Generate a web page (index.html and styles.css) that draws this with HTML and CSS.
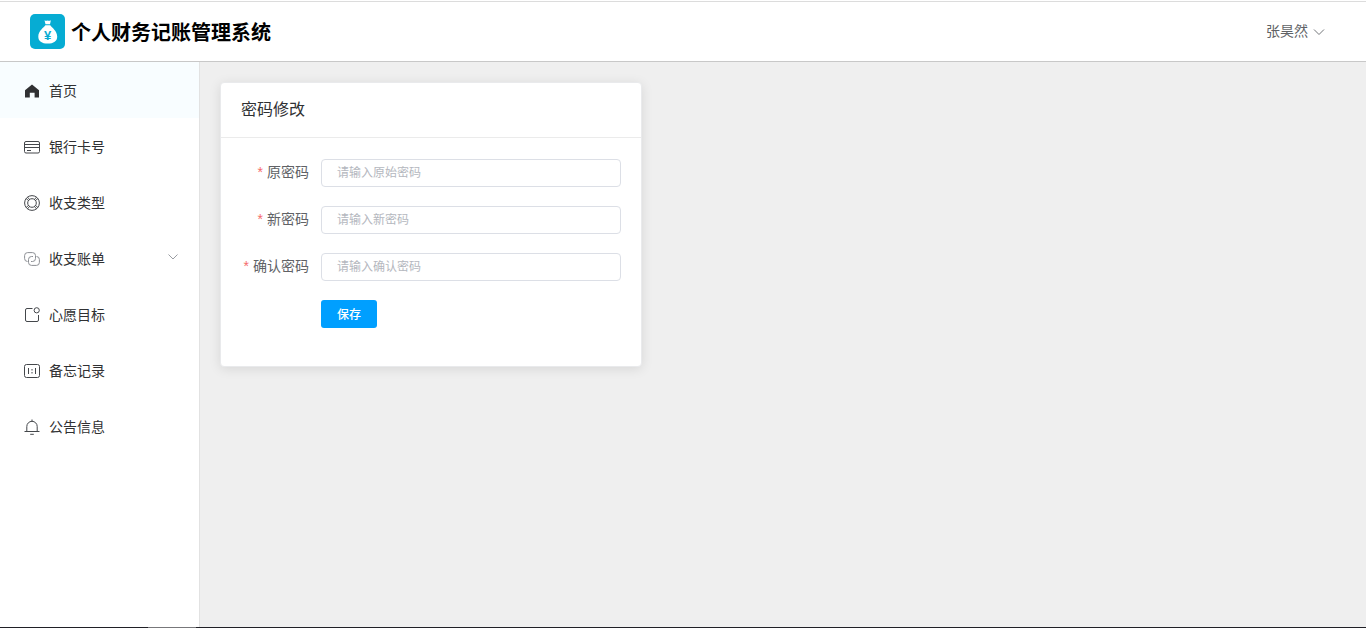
FILE: index.html
```html
<!DOCTYPE html>
<html lang="zh-CN">
<head>
<meta charset="utf-8">
<title>个人财务记账管理系统</title>
<link rel="stylesheet" href="styles.css">
</head>
<body>
<div class="app">
  <header class="header">
    <div class="brand">
      <svg class="logo" viewBox="0 0 35 35" aria-hidden="true">
        <rect width="35" height="35" rx="5" fill="#06acd3"/>
        <path d="M14.500 6.200q1.600.9 3 .2 1.500.7 3.400-.2L20 10.300h-4.500z" fill="#fff"/>
        <path d="M15.300 11.300h5c1.500 2.300 6.900 5.700 6.900 11.200 0 4.800-3.600 7.100-9.500 7.100s-9.400-2.300-9.400-7.100c0-5.500 5.500-8.900 7-11.200z" fill="#fff"/>
        <text class="logo-sign" x="17.500" y="26" text-anchor="middle">¥</text>
      </svg>
      <h1 class="brand-name">个人财务记账管理系统</h1>
    </div>
    <button class="user" type="button"><span>张昊然</span>
      <svg class="chevron" viewBox="0 0 12 12"><path d="M1 3.500 6 8.500l5-5"/></svg>
    </button>
  </header>
  <div class="main">
    <nav class="sidebar">
      <a class="item active" href="#">
        <svg class="icon solid" viewBox="0 0 16 16"><path d="M8 1.600 15 7.200V14.500h-4.400V9.800H5.800v4.700H1V7.200z"/></svg>
        <span class="item-text">首页</span></a>
      <a class="item" href="#">
        <svg class="icon" viewBox="0 0 16 16"><rect x=".5" y="2.500" width="15" height="11.500" rx="1.500"/><path d="M.5 5.500h15M.5 8.500h15M3 11.500h4"/></svg>
        <span class="item-text">银行卡号</span></a>
      <a class="item" href="#">
        <svg class="icon" viewBox="0 0 16 16"><circle cx="8" cy="8" r="7.400"/><circle cx="8" cy="8" r="4.300"/><path d="M2.300 3.500 4.300 5.600M3.500 2.300 5.600 4.300M12.500 2.300 10.400 4.300M13.700 3.500 11.700 5.600M2.300 12.500 4.300 10.400M3.500 13.700 5.600 11.700M12.500 13.700 10.400 11.700M13.700 12.500 11.700 10.400"/></svg>
        <span class="item-text">收支类型</span></a>
      <a class="item" href="#">
        <svg class="icon muted" viewBox="0 0 16 16"><path d="M3.500 10.500A3 3 0 0 1 .6 7.500V4.600a3 3 0 0 1 3-3h4.900a3 3 0 0 1 3 3v2.900a3 3 0 0 1-3 3H7"/><path d="M12.500 5.500a3 3 0 0 1 2.900 3v2.900a3 3 0 0 1-3 3H7.500a3 3 0 0 1-3-3V8.500a3 3 0 0 1 3-3H9"/></svg>
        <span class="item-text">收支账单</span>
        <svg class="chevron arrow" viewBox="0 0 12 12"><path d="M1.500 3.500 6 8l4.500-4.500"/></svg></a>
      <a class="item" href="#">
        <svg class="icon" viewBox="0 0 16 16"><path d="M8.500 1.500H3q-1.500 0-1.500 1.500v10q0 1.500 1.500 1.500h10q1.500 0 1.500-1.500V8"/><circle cx="12.700" cy="3.300" r="2.600"/></svg>
        <span class="item-text">心愿目标</span></a>
      <a class="item" href="#">
        <svg class="icon" viewBox="0 0 16 16"><rect x=".5" y="1.500" width="15" height="13" rx="2"/><path d="M4.500 5v6M11.500 5v6M8 6v1.500M8 9v1.500"/></svg>
        <span class="item-text">备忘记录</span></a>
      <a class="item" href="#">
        <svg class="icon" viewBox="0 0 16 16"><path d="M2.800 12.500V7.500a5.200 5.200 0 0 1 10.400 0v5M.5 12.500h15M8 .5v2M6.200 15.300h3.600"/></svg>
        <span class="item-text">公告信息</span></a>
    </nav>
    <main class="content">
      <section class="card">
        <h2 class="card-title">密码修改</h2>
        <form class="form">
          <div class="row">
            <label class="label" for="old">原密码</label>
            <input class="input" id="old" type="password" placeholder="请输入原始密码">
          </div>
          <div class="row">
            <label class="label" for="new">新密码</label>
            <input class="input" id="new" type="password" placeholder="请输入新密码">
          </div>
          <div class="row">
            <label class="label" for="confirm">确认密码</label>
            <input class="input" id="confirm" type="password" placeholder="请输入确认密码">
          </div>
          <div class="row actions">
            <button class="save" type="button">保存</button>
          </div>
        </form>
      </section>
    </main>
  </div>
  <div class="edge"></div>
</div>
</body>
</html>
```

FILE: styles.css
```css
* {
  box-sizing: border-box;
}

body {
  margin: 0;
  font-family: "Liberation Sans", "Noto Sans CJK SC", sans-serif;
  font-size: 14px;
  color: #303133;
}

button,
input {
  font-family: inherit;
}

.app {
  display: flex;
  flex-direction: column;
  min-height: 100vh;
  padding-top: 1px;
}

.header {
  display: flex;
  align-items: center;
  justify-content: space-between;
  height: 61px;
  padding: 0 41px 0 30px;
  border-top: 1px solid #dcdcdc;
  border-bottom: 1px solid #c8c8c8;
  background: #fff;
}

.brand {
  display: flex;
  align-items: center;
  gap: 6px;
}

.logo {
  width: 35px;
  height: 35px;
}

.logo-sign {
  font: bold 13px "Liberation Sans", sans-serif;
  fill: #06acd3;
}

.brand-name {
  margin: 0;
  padding-top: 2px;
  font-size: 20px;
  line-height: 30px;
  font-weight: 700;
  color: #000;
}

.user {
  display: flex;
  align-items: center;
  gap: 5px;
  padding: 0;
  border: 0;
  background: none;
  font-size: 14px;
  line-height: 20px;
  color: #606266;
}

.user span {
  padding-bottom: 2px;
}

.chevron {
  width: 12px;
  height: 12px;
  fill: none;
  stroke: #73767a;
}

.main {
  display: flex;
  flex: 1;
}

.sidebar {
  width: 200px;
  flex: none;
  border-right: 1px solid #e2e2e2;
  background: #fff;
}

.item {
  display: flex;
  align-items: center;
  gap: 9px;
  height: 56px;
  padding: 2px 20px 0 24px;
  color: #303133;
  text-decoration: none;
}

.item.active {
  background: #f8fdff;
}

.item-text {
  padding-bottom: 2px;
}

.icon {
  width: 16px;
  height: 16px;
  fill: none;
  stroke: #44474b;
}

.icon.solid {
  fill: #303133;
  stroke: none;
}

.icon.muted {
  stroke: #8c8f94;
}

.arrow {
  margin: 0 0 4px auto;
  stroke: #9a9da2;
}

.content {
  flex: 1;
  padding: 20px;
  background: #efefef;
}

.card {
  max-width: 422px;
  border: 1px solid #e9eaec;
  border-radius: 4px;
  background: #fff;
  box-shadow: 0 2px 12px rgba(0, 0, 0, 0.1);
}

.card-title {
  margin: 0;
  padding: 15px 20px;
  border-bottom: 1px solid #ebebeb;
  font-size: 16px;
  line-height: 24px;
  font-weight: 400;
}

.form {
  display: flex;
  flex-direction: column;
  gap: 19px;
  padding: 21px 20px 38px;
}

.row {
  display: flex;
  align-items: center;
}

.label {
  width: 80px;
  padding: 0 12px 2px 0;
  line-height: 26px;
  text-align: right;
  white-space: nowrap;
  color: #606266;
}

.label::before {
  content: "*";
  margin-right: 4px;
  color: #f56c6c;
}

.input {
  flex: 1;
  min-width: 0;
  height: 28px;
  padding: 0 15px;
  border: 1px solid #dcdfe6;
  border-radius: 4px;
  background: #fff;
  font-size: 12px;
  color: #606266;
}

.input::placeholder {
  color: #b4b7be;
}

.actions {
  padding-left: 80px;
}

.save {
  height: 28px;
  padding: 0 16px 2px;
  border: 0;
  border-radius: 3px;
  background: #009fff;
  font-size: 12px;
  font-weight: 500;
  color: #fff;
}

.edge {
  height: 1px;
  background: linear-gradient(90deg, #202026 148px, #77777a 148px 196px, #202026 196px);
}
```
